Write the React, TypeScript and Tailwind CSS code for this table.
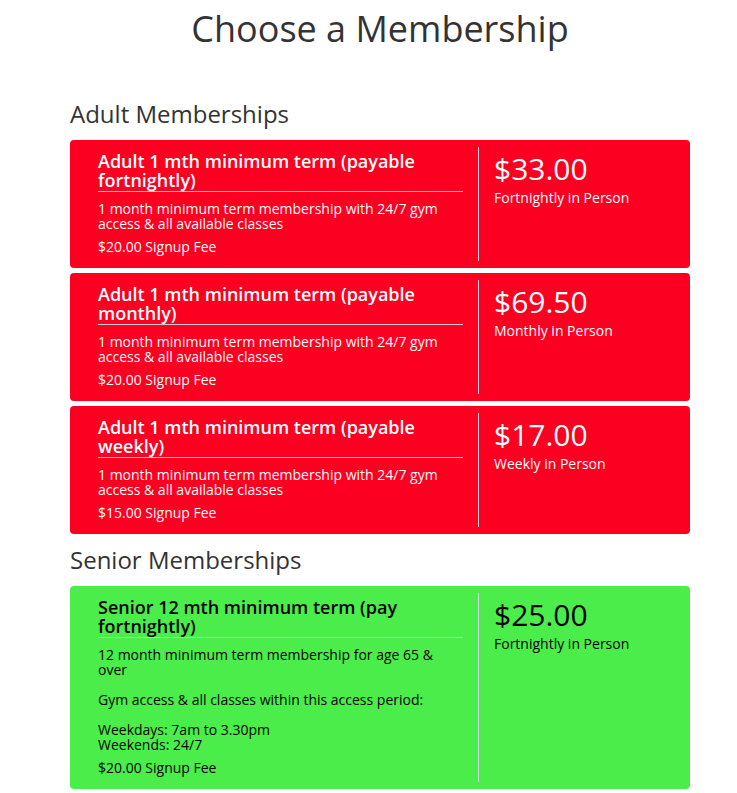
import React from "react";

type Plan = {
  title: string;
  desc: string[][];
  fee: string;
  price: string;
  period: string;
};

const adult: Plan[] = [
  {
    title: "Adult 1 mth minimum term (payable fortnightly)",
    desc: [["1 month minimum term membership with 24/7 gym access & all available classes"]],
    fee: "$20.00 Signup Fee",
    price: "$33.00",
    period: "Fortnightly in Person",
  },
  {
    title: "Adult 1 mth minimum term (payable monthly)",
    desc: [["1 month minimum term membership with 24/7 gym access & all available classes"]],
    fee: "$20.00 Signup Fee",
    price: "$69.50",
    period: "Monthly in Person",
  },
  {
    title: "Adult 1 mth minimum term (payable weekly)",
    desc: [["1 month minimum term membership with 24/7 gym access & all available classes"]],
    fee: "$15.00 Signup Fee",
    price: "$17.00",
    period: "Weekly in Person",
  },
];

const senior: Plan[] = [
  {
    title: "Senior 12 mth minimum term (pay fortnightly)",
    desc: [
      ["12 month minimum term membership for age 65 & over"],
      ["Gym access & all classes within this access period:"],
      ["Weekdays: 7am to 3.30pm", "Weekends: 24/7"],
    ],
    fee: "$20.00 Signup Fee",
    price: "$25.00",
    period: "Fortnightly in Person",
  },
];

function Card({ p, green }: { p: Plan; green?: boolean }) {
  return (
    <div
      className={
        "flex rounded-[4px] px-[13px] py-[7px] " +
        (green ? "bg-[#4aed4a] text-black" : "bg-[#fb0020] text-white")
      }
    >
      <div className="w-2/3 border-r border-[#d0d4e0] px-[15px] pt-[5px] pb-[6px]">
        <div className="border-b border-[#c4cad8] text-[18px] font-semibold leading-[19px] pb-[1px]">
          {p.title}
        </div>
        <div className="mt-[9px] text-[14px] leading-[15px]">
          {p.desc.map((para, i) => (
            <p key={i} className={i > 0 ? "mt-[15px]" : ""}>
              {para.map((l, j) => (
                <span key={j} className="block">
                  {l}
                </span>
              ))}
            </p>
          ))}
        </div>
        <div className="mt-[8px] text-[14px] leading-[16px]">{p.fee}</div>
      </div>
      <div className="w-1/3 px-[15px] pt-[5px]">
        <div className="text-[30px] leading-[34px]">{p.price}</div>
        <div className="mt-[3px] text-[14px] leading-[18px]">{p.period}</div>
      </div>
    </div>
  );
}

export default function App() {
  return (
    <div
      className="min-h-[793px] bg-white text-[#333]"
      style={{ fontFamily: '"Open Sans", sans-serif' }}
    >
      <div className="ml-[70px] w-[620px] pb-[8px]">
        <h1 className="pt-[6px] text-center text-[36px] leading-[46px]">Choose a Membership</h1>
        <h2 className="mt-[48px] text-[24px] leading-[28px]">Adult Memberships</h2>
        <div className="mt-[12px] flex flex-col gap-[5px]">
          {adult.map((p) => (
            <Card key={p.price} p={p} />
          ))}
        </div>
        <h2 className="mt-[12px] text-[24px] leading-[28px]">Senior Memberships</h2>
        <div className="mt-[12px] flex flex-col gap-[5px]">
          {senior.map((p) => (
            <Card key={p.price} p={p} green />
          ))}
        </div>
      </div>
    </div>
  );
}
